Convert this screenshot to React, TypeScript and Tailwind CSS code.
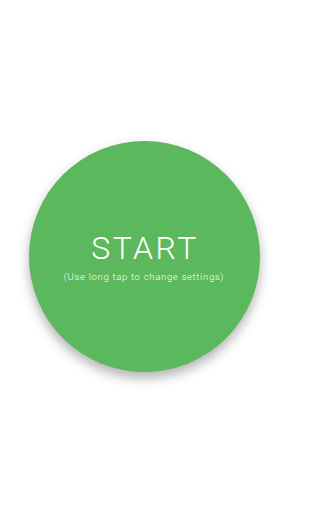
export default function App() {
  return (
    <div className="flex h-[512px] w-[288px] items-center justify-center bg-white font-['Roboto',sans-serif]">
      <button className="flex h-[231px] w-[231px] flex-col items-center justify-center rounded-full bg-[#5cb85c] pt-[2px] text-white shadow-[0_6px_12px_rgba(0,0,0,0.3)]">
        <span className="pl-[2px] text-[32px] font-light leading-none tracking-[2.5px]">START</span>
        <span className="mt-[8px] text-[9.5px] font-light leading-none tracking-[0.7px]">
          (Use long tap to change settings)
        </span>
      </button>
    </div>
  );
}
